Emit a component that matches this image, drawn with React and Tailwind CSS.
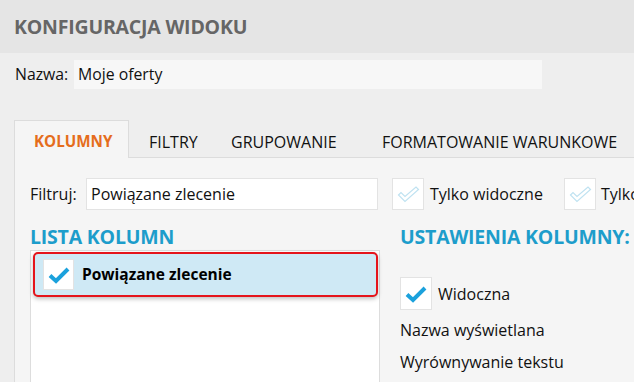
import React from "react";

const FONT = { fontFamily: '"Open Sans", "Noto Sans", Arial, sans-serif' };

function SolidCheck() {
  return (
    <svg width="22" height="18" viewBox="0 0 22 18">
      <path d="M2 9.5 L8 15 L20 3" fill="none" stroke="#1ba1dc" strokeWidth="4" strokeLinecap="butt" strokeLinejoin="miter" />
    </svg>
  );
}

function FaintCheck() {
  return (
    <svg width="23" height="17" viewBox="0 0 23 17">
      <path d="M1.5 9 L4 6.5 L8 10.5 L19 1 L21.5 3.5 L8 15.5 Z" fill="#ffffff" stroke="#bfe2f1" strokeWidth="1.2" strokeLinejoin="miter" />
    </svg>
  );
}

export default function App() {
  return (
    <div className="w-[634px] h-[382px] overflow-hidden bg-[#eeeeee] text-[#111]" style={FONT}>
      <div className="h-[53px] bg-[#e5e5e5] flex items-center pl-[14px]">
        <span className="text-[19.5px] font-bold text-[#666666] tracking-[-0.2px]">KONFIGURACJA WIDOKU</span>
      </div>
      <div className="flex items-center pl-[15px] pt-[7px]">
        <span className="w-[59px] text-[15.8px]">Nazwa:</span>
        <div className="w-[468px] h-[29px] bg-[#f7f7f7] flex items-center pl-[4px] text-[15.8px]">Moje oferty</div>
      </div>
      <div className="ml-[14px] mt-[31px] flex items-end relative z-10 -mb-px">
        <div className="w-[115px] h-[38px] border border-b-0 border-[#dcdcdc] bg-[#f5f5f5] pl-[19px] pt-[9px] text-[15.2px] font-bold text-[#e56d1c]">KOLUMNY</div>
        <div className="w-[82px] h-[37px] pl-[20px] pt-[9px] text-[16px]">FILTRY</div>
        <div className="w-[151px] h-[37px] pl-[20px] pt-[9px] text-[16px]">GRUPOWANIE</div>
        <div className="h-[37px] pl-[20px] pt-[9px] text-[16px] whitespace-nowrap">FORMATOWANIE WARUNKOWE</div>
      </div>
      <div className="ml-[14px] w-[700px] h-[240px] border-l border-t border-[#dcdcdc] bg-[#f5f5f5] pl-[15px] pt-[20px]">
        <div className="flex items-center">
          <span className="w-[56px] text-[16px]">Filtruj:</span>
          <div className="w-[292px] h-[32px] bg-white border border-[#e3e3e3] flex items-center pl-[4px] text-[16px]">Powiązane zlecenie</div>
          <div className="ml-[14px] w-[32px] h-[32px] bg-white border border-[#e3e3e3] flex items-center justify-center"><FaintCheck /></div>
          <span className="ml-[6px] w-[134px] text-[16px]">Tylko widoczne</span>
          <div className="w-[32px] h-[32px] bg-white border border-[#e3e3e3] flex items-center justify-center"><FaintCheck /></div>
          <span className="ml-[5px] text-[16px]">Tylko</span>
        </div>
        <div className="flex mt-[14px]">
          <div className="w-[350px] flex flex-col">
            <div className="h-[26px] text-[19.5px] font-bold text-[#1d9dcb] leading-[26px] tracking-[-0.2px]">LISTA KOLUMN</div>
            <div className="h-[200px] bg-white border border-b-0 border-[#dddddd] pt-[1px] pl-[2px] pr-[1px]">
              <div className="h-[45px] rounded-[5px] border-2 border-[#e5141b] bg-[#cfe9f5] shadow-[0_2px_4px_rgba(0,0,0,0.25)] flex items-center pl-[8px]">
                <div className="w-[31px] h-[31px] bg-white border border-[#e3e3e3] flex items-center justify-center"><SolidCheck /></div>
                <span className="ml-[8px] text-[15.5px] font-bold text-black">Powiązane zlecenie</span>
              </div>
            </div>
          </div>
          <div className="ml-[20px] flex flex-col">
            <div className="h-[26px] text-[19.5px] font-bold text-[#1d9dcb] leading-[26px] tracking-[-0.2px] whitespace-nowrap">USTAWIENIA KOLUMNY:</div>
            <div className="mt-[27px] flex items-center">
              <div className="w-[32px] h-[33px] bg-white border border-[#e3e3e3] flex items-center justify-center"><SolidCheck /></div>
              <span className="ml-[6px] text-[16px]">Widoczna</span>
            </div>
            <div className="mt-[8px] text-[16px] leading-[24px]">Nazwa wyświetlana</div>
            <div className="mt-[8px] text-[16px] leading-[24px]">Wyrównywanie tekstu</div>
          </div>
        </div>
      </div>
    </div>
  );
}
